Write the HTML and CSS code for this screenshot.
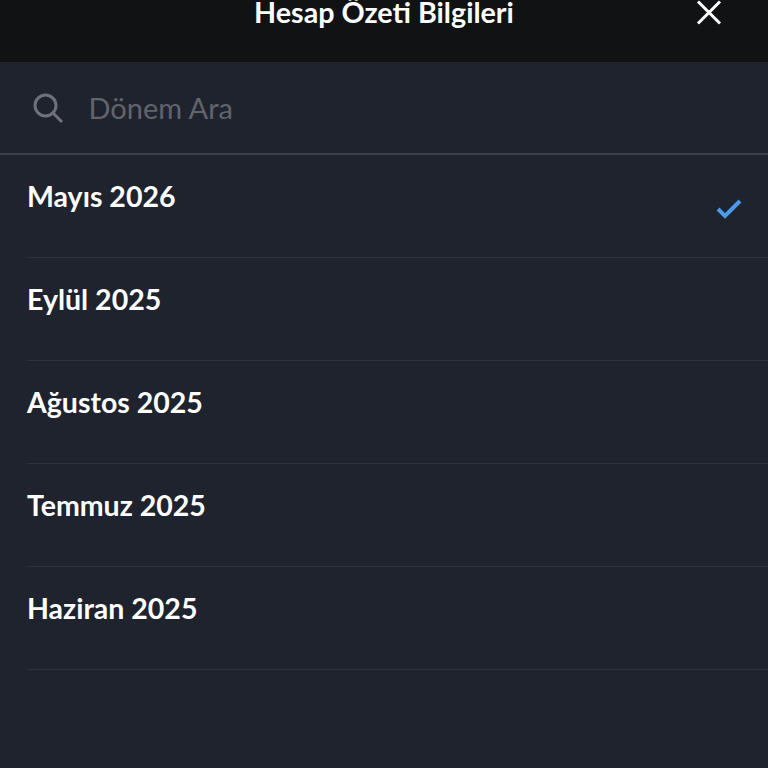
FILE: index.html
```html
<!DOCTYPE html>
<html lang="tr">
<head>
<meta charset="utf-8">
<title>Hesap Özeti Bilgileri</title>
<link rel="stylesheet" href="styles.css">
</head>
<body>
<header class="topbar">
  <h1 class="title">Hesap Özeti Bilgileri</h1>
  <svg class="close" width="28" height="28" viewBox="0 0 28 28" aria-hidden="true"><path d="M3 2.500 L25 24.500 M25 2.500 L3 24.500" /></svg>
</header>
<div class="search">
  <svg class="search-icon" width="32" height="32" viewBox="0 0 32 32" aria-hidden="true"><circle cx="13.500" cy="13.500" r="10.500"/><path d="M21 21 L30 30"/></svg>
  <span class="placeholder">Dönem Ara</span>
</div>
<ul class="list">
  <li class="row"><span>Mayıs 2026</span>
    <svg class="check" width="26" height="20" viewBox="0 0 26 20" aria-hidden="true"><path d="M2 10 L9 17 L24 2"/></svg></li>
  <li class="row"><span>Eylül 2025</span></li>
  <li class="row"><span>Ağustos 2025</span></li>
  <li class="row"><span>Temmuz 2025</span></li>
  <li class="row"><span>Haziran 2025</span></li>
</ul>
</body>
</html>
```
FILE: styles.css
```css
* { box-sizing: border-box; }
html, body { margin: 0; height: 100%; }
body {
  background: #1f232e;
  color: #fff;
  font-family: "Lato", "Noto Sans", sans-serif;
  overflow: hidden;
  width: 768px;
  height: 768px;
}
.topbar {
  height: 62px;
  background: #101214;
  display: flex;
  justify-content: center;
  position: relative;
}
.title {
  margin: 0;
  font-size: 28.700px;
  font-weight: 700;
  line-height: 24px;
  white-space: nowrap;
}
.close {
  position: absolute;
  right: 45px;
  top: -1px;
  fill: none;
  stroke: #fff;
  stroke-width: 3;
}
.search {
  height: 93px;
  display: flex;
  align-items: center;
  padding-left: 32px;
  gap: 25px;
  border-bottom: 2px solid #3c4049;
}
.search-icon { fill: none; stroke: #6f7178; stroke-width: 3; }
.placeholder { font-size: 29px; color: #62646c; margin-left: -0.500px; }
.list { list-style: none; margin: 0; padding: 0 0 0 27px; }
.row {
  height: 103px;
  border-bottom: 1px solid #2e323c;
  font-size: 28.500px;
  font-weight: 700;
  padding-top: 24px;
  line-height: 34px;
  display: flex;
  justify-content: space-between;
}
.check { fill: none; stroke: #4a9bec; stroke-width: 4; margin: 20px 26px 0 0; }
```
